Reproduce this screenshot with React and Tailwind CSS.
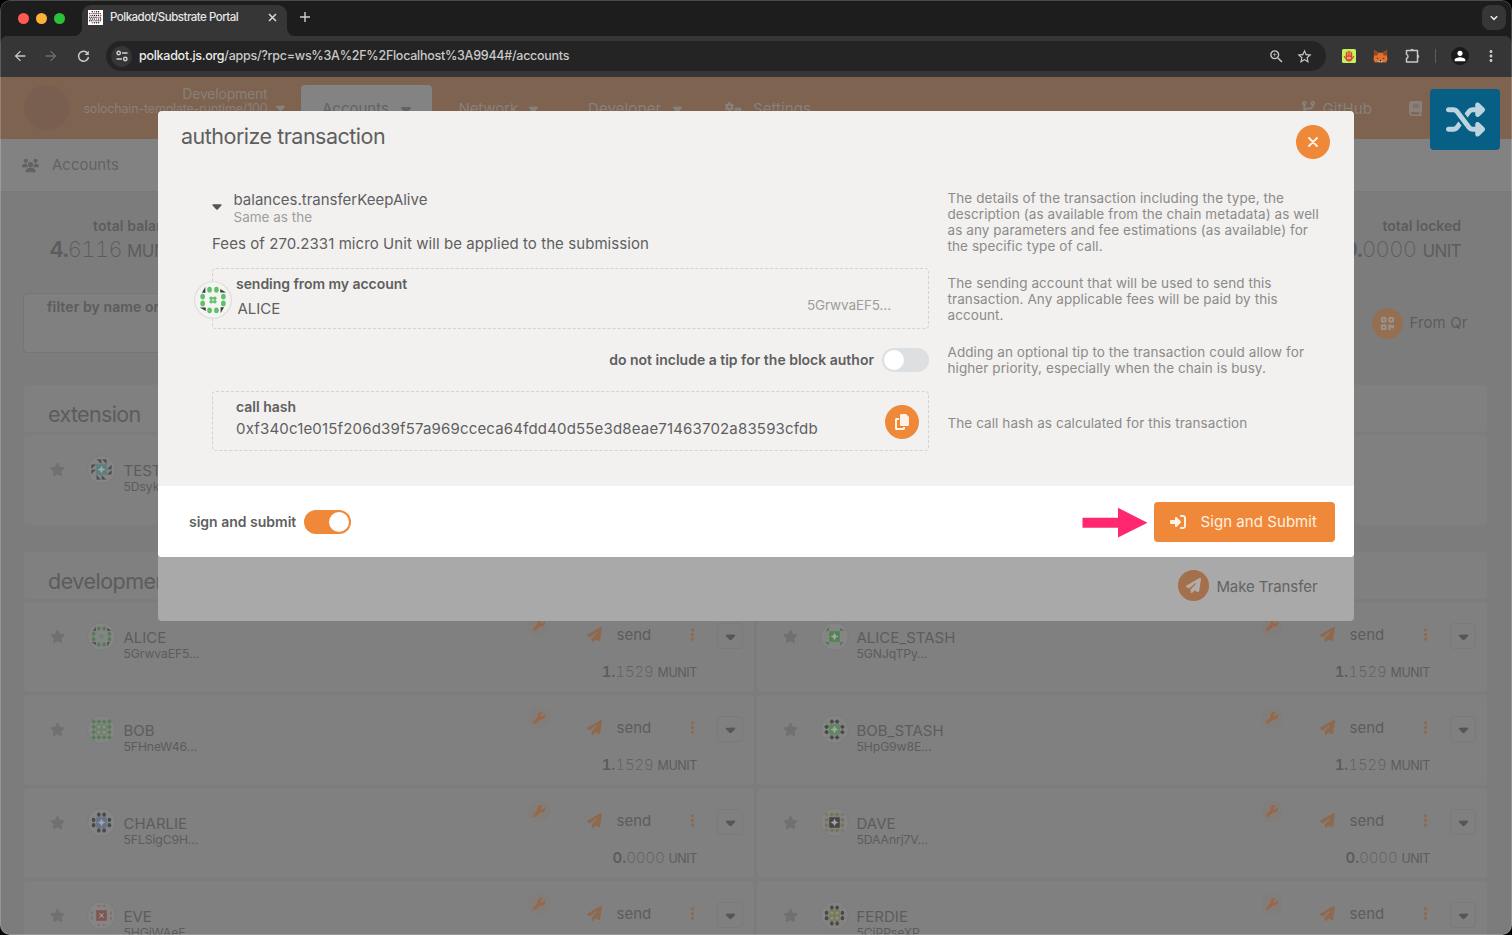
import React from "react";
import {
  FaBook,
  FaCaretDown,
  FaCodeBranch,
  FaCopy,
  FaEllipsisVertical,
  FaGears,
  FaPaperPlane,
  FaQrcode,
  FaRightToBracket,
  FaShuffle,
  FaStar,
  FaUsers,
  FaWrench,
} from "react-icons/fa6";
import { MdArrowBack, MdArrowForward, MdMoreVert, MdPerson, MdStarBorder, MdZoomIn } from "react-icons/md";

const SIDES = [[1, 0], [2, 0], [3, 1], [3, 2], [2, 3], [1, 3], [0, 2], [0, 1]];
const CORNERS = [[0, 0, 0], [3, 0, 90], [3, 3, 180], [0, 3, 270]];

function Cell({ x, y, kind, color, turn = 0 }) {
  const move = `translate(${x * 10} ${y * 10}) rotate(${turn} 5 5)`;
  if (kind === "dot") return <ellipse transform={move} cx="5" cy="5" rx="3.4" ry="4.2" fill={color} />;
  if (kind === "diamond") return <path transform={move} d="M5 .4 9.6 5 5 9.6.4 5Z" fill={color} />;
  if (kind === "tri") return <path transform={move} d="M1 .5 9.5 9.5 9.5 1Z" fill={color} />;
  if (kind === "sliver") return <path transform={move} d="M4 9.5 9 1 9 9.5Z" fill={color} />;
  if (kind === "tick") return <path transform={move} d="M1 1H9L6 4Z" fill={color} />;
  return null;
}

function Center({ kind, color }) {
  if (kind === "spark")
    return (
      <>
        <rect x="10" y="10" width="20" height="20" fill={color} />
        <path d="M20 12.5 22.3 17.7 27.5 20 22.3 22.3 20 27.5 17.7 22.3 12.5 20 17.7 17.7Z" fill="#a3a3a3" />
      </>
    );
  if (kind === "cross")
    return (
      <>
        <rect x="10" y="10" width="20" height="20" fill={color} />
        <path d="M14 14 20 18 26 14 22 20 26 26 20 22 14 26 18 20Z" fill="#9c9494" />
      </>
    );
  if (kind === "cluster")
    return (
      <g fill={color}>
        <circle cx="17.4" cy="17.4" r="2.6" />
        <circle cx="22.6" cy="17.4" r="2.6" />
        <circle cx="17.4" cy="22.6" r="2.6" />
        <circle cx="22.6" cy="22.6" r="2.6" />
      </g>
    );
  if (kind === "square") return <rect x="17.5" y="17.5" width="5" height="5" fill="none" stroke={color} strokeWidth="2" />;
  if (kind === "grid")
    return (
      <>
        <rect x="10" y="10" width="20" height="20" fill={color} />
        <g fill="#8d8d83">
          <circle cx="15" cy="15" r="3" />
          <circle cx="25" cy="15" r="3" />
          <circle cx="15" cy="25" r="3" />
          <circle cx="25" cy="25" r="3" />
        </g>
      </>
    );
  return null;
}

function Identicon({ spec, className, bg = "#858585", ring = "#797979" }) {
  const [side, sideColor, corner, cornerColor, center, centerColor] = spec;
  return (
    <svg viewBox="-7.5 -7.5 55 55" className={className}>
      <circle cx="20" cy="20" r="26.5" fill={bg} stroke={ring} strokeWidth="1.6" />
      {SIDES.map(([x, y], i) => (
        <Cell key={i} x={x} y={y} kind={side} color={sideColor} turn={side === "dot" ? 0 : Math.floor(i / 2) * 90} />
      ))}
      {CORNERS.map(([x, y, r]) => (
        <Cell key={r} x={x} y={y} kind={corner} color={cornerColor} turn={r} />
      ))}
      <Center kind={center} color={centerColor} />
    </svg>
  );
}

const ICONS = {
  test: ["tri", "#4e4e4e", "none", "", "spark", "#5b807d"],
  alice: ["dot", "#557d57", "sliver", "#4b4b4b", "square", "#5d8a5f"],
  aliceStash: ["none", "", "sliver", "#557057", "spark", "#4f8552"],
  bob: ["diamond", "#557d57", "diamond", "#557d57", "grid", "#6b856c"],
  bobStash: ["diamond", "#484848", "dot", "#7c867c", "spark", "#5c8a5e"],
  charlie: ["dot", "#484848", "none", "", "spark", "#66728c"],
  dave: ["diamond", "#7b7358", "dot", "#7c7b70", "spark", "#474747"],
  eve: ["tick", "#85605c", "none", "", "cross", "#80544f"],
  ferdie: ["dot", "#484848", "dot", "#82827a", "grid", "#7a7a55"],
};

function BrowserChrome() {
  return (
    <div className="h-[77px] shrink-0 bg-[#1d1d1d]">
      <div className="flex h-9 items-end">
        <div className="flex h-9 w-[82px] items-center gap-[7px] pl-[18px]">
          <span className="size-[11px] rounded-full bg-[#fe5a52]" />
          <span className="size-[11px] rounded-full bg-[#fdb236]" />
          <span className="size-[11px] rounded-full bg-[#2bc03b]" />
        </div>
        <div className="relative flex h-[31px] w-[205px] items-center rounded-t-[9px] bg-[#363636] pl-[6px]">
          <svg className="absolute -left-2 bottom-0 size-2" viewBox="0 0 8 8"><path d="M8 0V8H0A8 8 0 0 0 8 0Z" fill="#363636" /></svg>
          <svg className="absolute -right-2 bottom-0 size-2" viewBox="0 0 8 8"><path d="M0 0V8H8A8 8 0 0 1 0 0Z" fill="#363636" /></svg>
          <svg className="-mt-[6px] size-[15px]" viewBox="0 0 15 15">
            <rect width="15" height="15" fill="#fff" />
            {[1.8, 3.6, 5.4, 7.2, 9, 10.8, 12.8].map((y, r) =>
              [2.2, 4.3, 6.4, 8.5, 10.6, 12.7].map((x, c) => {
                if ((r === 0 || r === 6) && (c === 0 || c === 5)) return null;
                return <circle key={`${r}-${c}`} cx={r % 2 ? x - 0.5 : x} cy={y} r="0.72" fill={(r + c) % 5 === 2 ? "#c9426b" : "#222"} />;
              })
            )}
          </svg>
          <span className="-mt-[7px] ml-[7px] w-[158px] text-[11.5px] font-medium leading-4 tracking-[-0.5px] text-[#e6e6e6]">Polkadot/Substrate Portal</span>
          <svg className="-mt-[6px] size-[9px] shrink-0" viewBox="0 0 9 9"><path d="M1 1 8 8M8 1 1 8" stroke="#d8d8d8" strokeWidth="1.5" /></svg>
        </div>
        <svg className="mb-[14px] ml-[13px] size-[10px]" viewBox="0 0 10 10"><path d="M5 0V10M0 5H10" stroke="#d0d0d0" strokeWidth="1.4" /></svg>
        <div className="mb-[6px] ml-auto mr-[6px] flex h-[25px] w-[24px] items-center justify-center rounded-lg bg-[#363636]">
          <svg className="size-[8px]" viewBox="0 0 8 8"><path d="M.8 2.2 4 5.4 7.2 2.2" fill="none" stroke="#e6e6e6" strokeWidth="1.6" /></svg>
        </div>
      </div>
      <div className="flex h-[41px] items-center rounded-t-[8px] bg-[#363636] pb-px text-[#c8c8c8]">
        <MdArrowBack className="ml-[12px] size-4" />
        <MdArrowForward className="ml-[15px] size-4 text-[#6f6f6f]" />
        <svg className="ml-[18px] size-[13px]" viewBox="0 0 13 13">
          <path d="M10.6 3.2A5 5 0 1 0 11.5 7" fill="none" stroke="#c8c8c8" strokeWidth="1.5" />
          <path d="M11.8.8V5H7.6Z" fill="#c8c8c8" />
        </svg>
        <div className="ml-[16px] flex h-[30px] w-[1220px] items-center rounded-full bg-[#242424] pl-[5px]">
          <span className="flex size-[21px] items-center justify-center rounded-full bg-[#363636]">
            <svg className="size-3" viewBox="0 0 12 12" fill="none" stroke="#d4d4d4" strokeWidth="1.4">
              <circle cx="2.7" cy="3" r="1.7" />
              <path d="M6 3H11.5M.5 9H6" />
              <circle cx="9.3" cy="9" r="1.7" />
            </svg>
          </span>
          <span className="ml-[7px] text-[12.5px] font-medium leading-5 tracking-[-0.27px] text-[#c9c9c9]">
            <span className="text-[#ececec]">polkadot.js.org</span>/apps/?rpc=ws%3A%2F%2Flocalhost%3A9944#/accounts
          </span>
          <MdZoomIn className="ml-auto size-[17px]" />
          <MdStarBorder className="ml-[11px] mr-[13px] size-[17px]" />
        </div>
        <svg className="ml-[16px] size-[14px]" viewBox="0 0 14 14">
          <rect width="14" height="14" rx="1.5" fill="#c4f25e" />
          <g stroke="#d8452c" strokeWidth="1.2" strokeLinecap="round"><path d="M4.4 7V3.6M6.1 6.5V2.4M7.9 6.5V2.4M9.6 7V3.6M2.4 7.6 4.2 10M11.6 7.6 9.8 10" /></g>
          <path d="M3.8 6.6H10.2V9.5A3.2 3 0 0 1 3.8 9.5Z" fill="#d8452c" />
          <ellipse cx="7" cy="9" rx="2" ry="1.2" fill="#f3d9a0" />
          <circle cx="7" cy="9" r=".8" fill="#d8452c" />
        </svg>
        <svg className="ml-[17px] size-[15px]" viewBox="0 0 16 16">
          <path d="M1 1 6 4H10L15 1 15 8 15.5 11 14 14.5 10 14H6L2 14.5.5 11 1 8Z" fill="#e2702a" />
          <path d="M1 1 6 4 4.5 7 1 7ZM15 1 10 4 11.5 7 15 7Z" fill="#8e4a26" />
          <path d="M3.5 9 6 9.8 5 10.6ZM12.5 9 10 9.8 11 10.6Z" fill="#2b3440" />
          <path d="M6 12.5 7 11.8H9L10 12.5V14H6Z" fill="#d8c8bd" />
          <path d="M7 11.8H9L8.6 13.2H7.4Z" fill="#1f1f1f" />
        </svg>
        <svg className="ml-[17px] size-[16px]" viewBox="0 0 16 16" fill="none" stroke="#c8c8c8" strokeWidth="1.5">
          <path d="M1.5 2.5H12.5V14H1.5V10.4A2.1 2.1 0 0 0 1.5 6.4Z" strokeLinejoin="round" />
          <path d="M5.4 2.4A1.7 1.7 0 0 1 8.6 2.4ZM12.6 6.8A1.7 1.7 0 0 1 12.6 10Z" fill="#c8c8c8" strokeWidth="1" />
        </svg>
        <span className="ml-[14px] h-[14px] w-px bg-[#5c5c5c]" />
        <span className="ml-[15px] flex size-[18px] items-center justify-center rounded-full bg-[#191919] text-white"><MdPerson className="size-[16px]" /></span>
        <MdMoreVert className="ml-[13px] size-[18px]" />
      </div>
    </div>
  );
}

function PageHeader() {
  return (
    <header className="flex h-[62px] shrink-0 items-start bg-[#7d6350] text-[15px] leading-5 text-[#89807a]">
      <span className="ml-6 mt-[8px] size-[45px] rounded-full bg-[#795f4f]" />
      <div className="mt-[9px] w-[198.5px] text-right">
        <div className="text-[14px] leading-[15px] tracking-[-0.2px]">Development</div>
        <div className="text-[12.5px] leading-4 tracking-[-0.18px]">solochain-template-runtime/100</div>
      </div>
      <FaCaretDown className="ml-[5px] mt-[23px] size-[15px]" />
      <div className="ml-[13px] mt-[8px] flex h-[54px] w-[131px] items-start rounded-t bg-[#838383] pl-[21.5px] pt-[13.5px] text-[#646464]">
        Accounts
        <FaCaretDown className="ml-[9px] mt-[2px] size-[16px]" />
      </div>
      <div className="ml-[27px] mt-[21.5px] flex w-[129.5px] tracking-[-0.1px]">Network<FaCaretDown className="ml-[8px] mt-[2px] size-[15px]" /></div>
      <div className="mt-[21.5px] flex w-[137px] tracking-[0.1px]">Developer<FaCaretDown className="ml-[9px] mt-[2px] size-[15px]" /></div>
      <div className="mt-[21.5px] flex tracking-[0.07px]"><FaGears className="mr-[10px] mt-[1px] size-[18px]" />Settings</div>
      <div className="ml-auto mt-[21.5px] flex w-[107px] items-start tracking-[0.1px]"><FaCodeBranch className="mr-[7px] mt-[2px] size-[15px]" />GitHub</div>
      <div className="mt-[21.5px] flex w-[104.5px]"><FaBook className="mr-[9px] mt-[2px] size-[15px]" />Wiki</div>
    </header>
  );
}

function AccountCard({ icon, name, address, balance, unit, actions = true }) {
  return (
    <div className="flex h-[90px] shrink-0 rounded bg-[#808080] text-[15px] text-[#5c5c5c]">
      <FaStar className="ml-[25.5px] mt-[26.5px] size-[15px] text-[#707070]" />
      <Identicon spec={ICONS[icon]} className="ml-[22px] mt-[19.5px] size-[29px]" />
      <div className="ml-[8px] mt-[27px]">
        <div className="text-[15px] leading-[17px]">{name}</div>
        <div className="-mt-[0.5px] text-[12.2px] leading-[15px] tracking-[-0.1px]">{address}</div>
      </div>
      {actions && (
        <div className="ml-auto w-[226px] shrink-0">
          <div className="flex h-[58px] items-start">
            <span className="mt-[11.5px] flex size-[22px] items-center justify-center rounded-full bg-[#817d7b] text-[#9c6544]"><FaWrench className="size-[12px]" /></span>
            <FaPaperPlane className="ml-[37px] mt-[25px] size-[15px] text-[#8f694e]" />
            <span className="ml-[14.5px] mt-[23px] leading-5">send</span>
            <FaEllipsisVertical className="ml-[34px] mt-[25px] size-[15px] text-[#8f694e]" />
            <span className="ml-auto mr-[11px] mt-[21px] flex size-[26px] items-center justify-center rounded border border-[#7a7a7a] text-[#565656]"><FaCaretDown className="size-[15px]" /></span>
          </div>
          {balance && (
            <div className="pr-[57px] pt-[2px] text-right leading-5 tabular-nums">
              <span className="font-semibold">{balance.slice(0, 2)}</span>
              <span className="font-extralight tracking-[-0.15px]">{balance.slice(2)}</span>
              <span className="ml-1 text-[12.5px] tracking-[-0.4px]">{unit}</span>
            </div>
          )}
        </div>
      )}
    </div>
  );
}

const DEV = [
  { icon: "alice", name: "ALICE", address: "5GrwvaEF5…", balance: "1.1529", unit: "MUNIT" },
  { icon: "aliceStash", name: "ALICE_STASH", address: "5GNJqTPy…", balance: "1.1529", unit: "MUNIT" },
  { icon: "bob", name: "BOB", address: "5FHneW46…", balance: "1.1529", unit: "MUNIT" },
  { icon: "bobStash", name: "BOB_STASH", address: "5HpG9w8E…", balance: "1.1529", unit: "MUNIT" },
  { icon: "charlie", name: "CHARLIE", address: "5FLSigC9H…", balance: "0.0000", unit: "UNIT" },
  { icon: "dave", name: "DAVE", address: "5DAAnrj7V…", balance: "0.0000", unit: "UNIT" },
  { icon: "eve", name: "EVE", address: "5HGjWAeF…" },
  { icon: "ferdie", name: "FERDIE", address: "5CiPPseXP…" },
];

function AccountsPage() {
  return (
    <main className="flex h-[858px] shrink-0 flex-col bg-[#7c7c7c] text-[#5c5c5c]">
      <PageHeader />
      <nav className="flex h-[53px] shrink-0 items-center border-b border-[#797979] bg-[#828282] pl-[22px] text-[15px] text-[#626262]">
        <FaUsers className="mr-[13px] size-[17px]" />Accounts
      </nav>
      <div className="flex h-[101px] shrink-0 justify-between pt-[24.5px]">
        <div>
          <div className="pl-[93px] text-[14px] font-semibold leading-[18px] tracking-[0.1px]">total balance</div>
          <div className="pl-[49.5px] text-[22px] leading-7 tabular-nums"><span className="font-semibold tracking-[-1px]">4.</span><span className="font-extralight tracking-[-0.6px]">6116</span><span className="ml-[5px] text-[17px] tracking-[-0.6px]">MUNIT</span></div>
        </div>
        <div className="pr-[51px] text-right">
          <div className="text-[14px] font-semibold leading-[18px]">total locked</div>
          <div className="text-[22px] leading-7 tabular-nums"><span className="font-semibold tracking-[-1px]">0.</span><span className="font-extralight tracking-[-0.6px]">0000</span><span className="ml-[6px] text-[17px] tracking-[-0.6px]">UNIT</span></div>
        </div>
      </div>
      <div className="flex h-[60px] shrink-0 justify-between pl-[23px]">
        <div className="w-[600px] rounded border border-[#757575] bg-[#808080] pl-[23px] pt-[3px] text-[14px] font-semibold leading-5 tracking-[0.1px]">filter by name or tags</div>
        <div className="flex w-[140px] items-center text-[15px] tracking-[0.1px]">
          <span className="mr-[6.5px] flex size-[31px] items-center justify-center rounded-full bg-[#956f52] text-[#9b948e]"><FaQrcode className="size-[15px]" /></span>From Qr
        </div>
      </div>
      <div className="ml-6 mr-[25px] mt-[32px] h-[47px] shrink-0 rounded bg-[#808080] pl-6 pt-[15px] text-[21.5px] leading-7 tracking-[-0.65px]">extension</div>
      <div className="ml-6 mr-[25px] mt-[3px] flex flex-col"><AccountCard icon="test" name="TEST" address="5DsykRt8…" actions={false} /></div>
      <div className="ml-6 mr-[25px] mt-[27px] h-[47px] shrink-0 rounded bg-[#808080] pl-6 pt-[15px] text-[21.5px] leading-7 tracking-[-0.5px]">development</div>
      <div className="ml-6 mr-[25px] mt-[3px] grid grid-cols-2 gap-[3px]">
        {DEV.map((a) => <AccountCard key={a.name} {...a} />)}
      </div>
    </main>
  );
}

function Toggle({ on }) {
  return (
    <span className={on ? "flex h-6 w-[46.5px] items-center justify-end rounded-full bg-[#ef8838] px-[2px]" : "flex h-6 w-[47px] items-center rounded-full bg-[#dedfe1] px-[2px]"}>
      <span className="size-5 rounded-full bg-white" />
    </span>
  );
}

function Help({ lines, className }) {
  return (
    <div className={className}>
      {lines.map((l) => <div key={l} className="whitespace-nowrap">{l}</div>)}
    </div>
  );
}

function AuthorizeModal() {
  const help = "ml-[18.5px] text-[13.5px] leading-4 tracking-[0.08px] text-[#8b8b8a]";
  return (
    <section className="absolute left-[158px] top-[111px] flex h-[446px] w-[1196px] flex-col overflow-hidden rounded bg-[#f2f1ef] text-[#5f5f5f]">
      <div className="flex h-[79px] shrink-0 items-start justify-between pl-[23px] pr-[24.5px]">
        <h1 className="mt-[11px] text-[21.5px] leading-7 tracking-[-0.5px]">authorize transaction</h1>
        <button className="mt-[14px] flex size-[34px] items-center justify-center rounded-full bg-[#ef8838]">
          <svg className="size-[10px]" viewBox="0 0 10 10"><path d="M1 1 9 9M9 1 1 9" stroke="#fff3e6" strokeWidth="1.9" strokeLinecap="round" /></svg>
        </button>
      </div>
      <div className="flex h-[78px] shrink-0 pl-[54px]">
        <div className="w-[717px]">
          <div className="flex items-center">
            <svg className="-mt-px h-[6px] w-[10px]" viewBox="0 0 10 6"><path d="M1 .3H9Q10 .6 9.4 1.6L5.7 5.4Q5 6 4.3 5.4L.6 1.6Q0 .6 1 .3Z" fill="#555" /></svg>
            <div className="ml-[11.5px]">
              <div className="text-[15px] leading-[19px]">balances.transferKeepAlive</div>
              <div className="text-[13.5px] leading-4 text-[#9d9d9c]">Same as the</div>
            </div>
          </div>
          <div className="mt-[9px] text-[15px] leading-5 tracking-[0.07px]">Fees of 270.2331 micro Unit will be applied to the submission</div>
        </div>
        <Help className={help} lines={["The details of the transaction including the type, the", "description (as available from the chain metadata) as well", "as any parameters and fee estimations (as available) for", "the specific type of call."]} />
      </div>
      <div className="flex h-[61px] shrink-0 pl-[54px]">
        <div className="relative flex w-[717px] rounded border border-dashed border-[#d3d2d0] pl-[23px]">
          <Identicon spec={["dot", "#5fc069", "sliver", "#3b3b3b", "cluster", "#5fc069"]} bg="#f4f4f3" ring="#dcdcdb" className="absolute -left-[19.5px] top-[11.5px] size-[38px]" />
          <div className="w-[571px] pt-[6px]">
            <div className="text-[14px] font-semibold leading-[18px] tracking-[-0.05px]">sending from my account</div>
            <div className="pl-[1.5px] pt-[5.5px] text-[15px] leading-5">ALICE</div>
          </div>
          <div className="pt-[26px] text-[13.5px] leading-5 tracking-[-0.12px] text-[#9d9d9c]">5GrwvaEF5…</div>
        </div>
        <Help className={help + " pt-[7px]"} lines={["The sending account that will be used to send this", "transaction. Any applicable fees will be paid by this", "account."]} />
      </div>
      <div className="flex h-[62px] shrink-0 pl-[54px]">
        <div className="flex w-[717px] items-center justify-end gap-2 pb-px text-[14px] font-semibold">
          do not include a tip for the block author
          <Toggle />
        </div>
        <Help className={help + " pt-[15px]"} lines={["Adding an optional tip to the transaction could allow for", "higher priority, especially when the chain is busy."]} />
      </div>
      <div className="flex h-[60px] shrink-0 pl-[54px]">
        <div className="flex w-[717px] items-start justify-between rounded border border-dashed border-[#d3d2d0] pl-[23px] pr-[9px]">
          <div className="pt-[6px]">
            <div className="text-[14px] font-semibold leading-[18px]">call hash</div>
            <div className="pt-[3px] text-[15px] leading-5 tracking-[0.17px]">0xf340c1e015f206d39f57a969cceca64fdd40d55e3d8eae71463702a83593cfdb</div>
          </div>
          <button className="mt-[13px] flex size-[34px] items-center justify-center rounded-full bg-[#ef8838] text-[#fff3e6]"><FaCopy className="size-[16px]" /></button>
        </div>
        <Help className={help + " pt-[24px]"} lines={["The call hash as calculated for this transaction"]} />
      </div>
      <footer className="mt-auto flex h-[71px] shrink-0 items-center bg-white pl-[31px] pr-[19px]">
        <span className="mr-2 text-[14px] font-semibold">sign and submit</span>
        <Toggle on />
        <svg className="ml-auto mr-[5px] h-[34px] w-[68px]" viewBox="0 0 68 34">
          <path d="M1.5 12.7H37V2.8L66.5 17.7 37 32.5V22.7H1.5Z" fill="#ff2770" />
        </svg>
        <button className="flex h-10 w-[181px] items-center rounded bg-[#ef8838] pl-[16px] pt-px text-[15px] tracking-[0.06px] text-[#fff1e2]">
          <FaRightToBracket className="mr-[14.5px] size-[16px]" />Sign and Submit
        </button>
      </footer>
    </section>
  );
}

export default function App() {
  return (
    <div className="h-[935px] w-[1512px] overflow-hidden bg-black font-['Inter',sans-serif]">
      <div className="relative h-full w-full overflow-hidden rounded-[10px]">
        <BrowserChrome />
        <AccountsPage />
        <section className="absolute left-[158px] top-[550px] flex h-[71px] w-[1196px] items-center justify-end rounded-b bg-[#a9a9a9] pr-[36.5px] text-[15px] tracking-[-0.07px] text-[#636363]">
          <span className="mr-[7px] flex size-[31px] items-center justify-center rounded-full bg-[#a4704b] text-[#b3aca7]"><FaPaperPlane className="size-[15px]" /></span><span className="pt-[3px]">Make Transfer</span>
        </section>
        <AuthorizeModal />
        <div className="absolute left-[1430px] top-[89px] flex h-[61px] w-[70px] items-center justify-center rounded bg-[#075f86] text-[#bcd4df]"><FaShuffle className="size-[39px]" /></div>
        <div className="pointer-events-none absolute inset-0 rounded-[10px] border border-white/20" />
      </div>
    </div>
  );
}
